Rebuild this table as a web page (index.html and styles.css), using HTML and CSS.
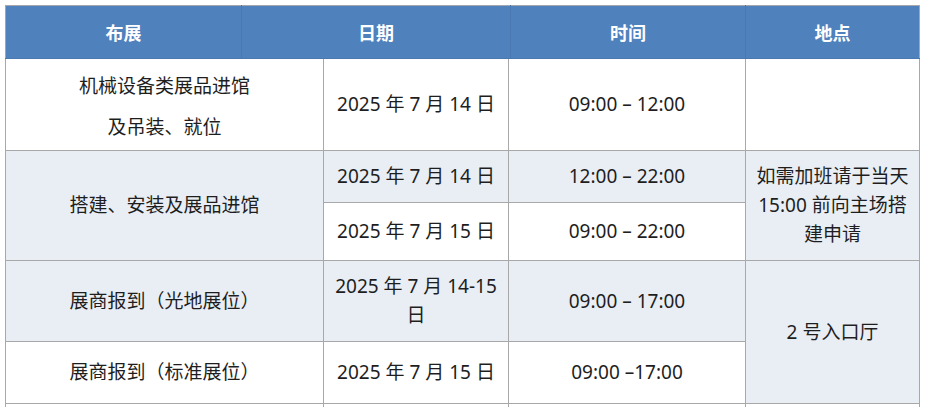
FILE: index.html
```html
<!DOCTYPE html>
<html lang="zh-CN">
<head>
<meta charset="utf-8">
<title>布展安排</title>
<link rel="stylesheet" href="styles.css">
</head>
<body>
<div class="sheet">
  <table class="head">
    <colgroup><col class="h1"><col class="h2"><col class="h3"><col class="h4"></colgroup>
    <tr><th>布展</th><th>日期</th><th>时间</th><th>地点</th></tr>
  </table>
  <table class="grid">
    <colgroup><col class="c1"><col class="c2"><col class="c3"><col class="c4"></colgroup>
    <tr class="ra">
      <td class="two"><div>机械设备类展品进馆</div><div>及吊装、就位</div></td>
      <td>2025 年 7 月 14 日</td>
      <td>09:00 – 12:00</td>
      <td></td>
    </tr>
    <tr class="rb">
      <td rowspan="2" class="shade">搭建、安装及展品进馆</td>
      <td class="shade">2025 年 7 月 14 日</td>
      <td class="shade">12:00 – 22:00</td>
      <td rowspan="2" class="shade note">如需加班请于当天<br>15:00 前向主场搭<br>建申请</td>
    </tr>
    <tr class="rc">
      <td>2025 年 7 月 15 日</td>
      <td>09:00 – 22:00</td>
    </tr>
    <tr class="rd">
      <td class="shade">展商报到（光地展位）</td>
      <td class="shade wrap">2025 年 7 月 14-15<br>日</td>
      <td class="shade">09:00 – 17:00</td>
      <td rowspan="2" class="shade">2 号入口厅</td>
    </tr>
    <tr class="re">
      <td>展商报到（标准展位）</td>
      <td>2025 年 7 月 15 日</td>
      <td>09:00 –17:00</td>
    </tr>
    <tr class="rf">
      <td></td><td></td><td></td><td></td>
    </tr>
  </table>
</div>
</body>
</html>
```

FILE: styles.css
```css
html, body {
  margin: 0;
  padding: 0;
  background: #ffffff;
}
body {
  font-family: "Noto Sans", "Noto Sans CJK SC", sans-serif;
  color: #1e1e1e;
}
.sheet {
  padding: 5px 0 0 5px;
  width: 914px;
}
table {
  border-collapse: collapse;
  table-layout: fixed;
  width: 914px;
}
.head th {
  background: #4f81bd;
  color: #ffffff;
  font-weight: 700;
  font-size: 18px;
  height: 52px;
  padding: 0;
  border: 1px solid #4a78b0;
  border-top-color: #a4a8ae;
  text-align: center;
  vertical-align: middle;
}
.head th:first-child { border-left-color: #a4a8ae; }
.head th:last-child { border-right-color: #a4a8ae; }
.h1 { width: 236px; }
.h2 { width: 269px; }
.h3 { width: 235px; }
.h4 { width: 174px; }

.c1 { width: 318px; }
.c2 { width: 185px; }
.c3 { width: 237px; }
.c4 { width: 174px; }

.grid td {
  border: 1px solid #a8a8a8;
  border-top: none;
  font-size: 19px;
  line-height: 29px;
  text-align: center;
  vertical-align: middle;
  padding: 0 4px;
  background: #ffffff;
}
.grid td.shade { background: #e9eef5; }
.grid td.two div { line-height: 41px; }
.ra td { height: 91px; }
.ra td.two { height: 87px; padding-top: 4px; }
.rb td { height: 51px; }
.rc td { height: 57px; }
.rd td { height: 80px; }
.re td { height: 61px; }
.rf td { height: 20px; }
```
